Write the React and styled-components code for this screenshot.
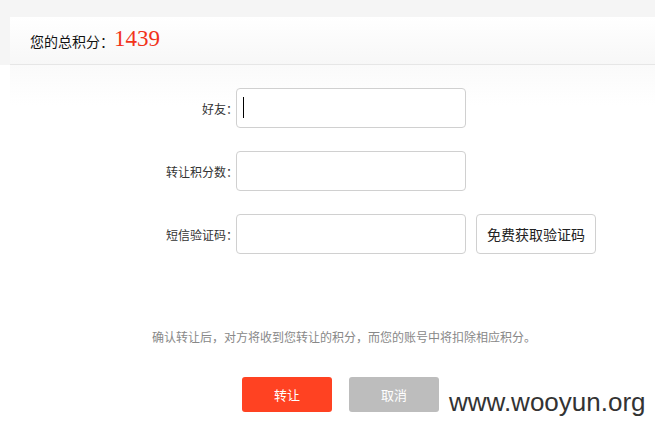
import styled, { createGlobalStyle } from "styled-components";

const GlobalStyle = createGlobalStyle`
  body {
    margin: 0;
    background: #fff;
    font-family: "Liberation Sans", "Noto Sans CJK SC", sans-serif;
    color: #333;
  }
`;

const Page = styled.div`
  position: relative;
  width: 655px;
  height: 433px;
  overflow: hidden;
`;

const Top = styled.div`
  background: #f5f5f5;
  padding: 17px 0 0 10px;
`;

const Header = styled.div`
  height: 47px;
  display: flex;
  align-items: center;
  padding-left: 20px;
  background: linear-gradient(#fff, #f7f7f7);
  border-bottom: 1px solid #e6e6e6;
`;

const HeaderLabel = styled.span`
  font-size: 14px;
  color: #111;
  font-feature-settings: "halt";
`;

const Score = styled.span`
  font-family: "Liberation Serif", serif;
  font-size: 23px;
  color: #f2331a;
  margin-left: 7px;
  position: relative;
  top: -2px;
`;

const Panel = styled.div`
  margin-left: 10px;
  padding-top: 23px;
  background: linear-gradient(#fafafa, #fff 40px);
`;

const Form = styled.div`
  display: flex;
  flex-direction: column;
  gap: 23px;
`;

const Row = styled.div`
  display: flex;
  align-items: center;
`;

const Label = styled.label`
  width: 222px;
  padding-right: 4px;
  text-align: right;
  font-size: 12px;
  color: #333;
  font-feature-settings: "halt";
`;

const Field = styled.div`
  position: relative;
`;

const Input = styled.input`
  box-sizing: border-box;
  width: 230px;
  height: 40px;
  border: 1px solid #d0d0d0;
  border-radius: 4px;
  padding: 0 8px;
  outline: none;
  background: #fff;
`;

const Caret = styled.span`
  position: absolute;
  left: 7px;
  top: 9px;
  width: 1px;
  height: 21px;
  background: #000;
`;

const CodeButton = styled.button`
  box-sizing: border-box;
  margin-left: 10px;
  width: 120px;
  height: 40px;
  border: 1px solid #d0d0d0;
  border-radius: 4px;
  background: #fff;
  font-family: inherit;
  font-size: 14px;
  color: #222;
  padding: 0;
`;

const Note = styled.p`
  margin: 75px 0 0;
  padding-left: 23px;
  text-align: center;
  font-size: 12px;
  line-height: 18px;
  color: #888;
`;

const Actions = styled.div`
  display: flex;
  gap: 17px;
  margin-top: 30px;
  padding-left: 232px;
`;

const ActionButton = styled.button`
  width: 90px;
  height: 35px;
  border: none;
  border-radius: 3px;
  background: ${(p) => (p.$primary ? "#ff4222" : "#bdbdbd")};
  color: #fff;
  font-family: inherit;
  font-size: 13px;
  padding: 0;
`;

const Watermark = styled.div`
  position: absolute;
  left: 449px;
  top: 387px;
  font-family: "Liberation Sans", sans-serif;
  font-size: 26px;
  color: #333;
`;

export default function App() {
  return (
    <Page>
      <GlobalStyle />
      <Top>
        <Header>
          <HeaderLabel>您的总积分：</HeaderLabel>
          <Score>1439</Score>
        </Header>
      </Top>
      <Panel>
        <Form>
          <Row>
            <Label>好友：</Label>
            <Field>
              <Input />
              <Caret />
            </Field>
          </Row>
          <Row>
            <Label>转让积分数：</Label>
            <Field>
              <Input />
            </Field>
          </Row>
          <Row>
            <Label>短信验证码：</Label>
            <Field>
              <Input />
            </Field>
            <CodeButton>免费获取验证码</CodeButton>
          </Row>
        </Form>
        <Note>确认转让后，对方将收到您转让的积分，而您的账号中将扣除相应积分。</Note>
        <Actions>
          <ActionButton $primary>转让</ActionButton>
          <ActionButton>取消</ActionButton>
        </Actions>
      </Panel>
      <Watermark>www.wooyun.org</Watermark>
    </Page>
  );
}
